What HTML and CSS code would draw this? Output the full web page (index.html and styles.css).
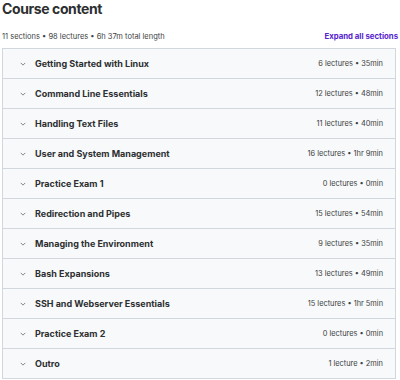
FILE: index.html
```html
<!DOCTYPE html>
<html>
<head>
<meta charset="utf-8">
<link rel="stylesheet" href="styles.css">
</head>
<body>
<div class="page">
  <h2 class="title">Course content</h2>
  <div class="meta">
    <span class="summary">11 sections • 98 lectures • 6h 37m total length</span>
    <span class="expand">Expand all sections</span>
  </div>
  <div class="list">
    <div class="row"><span class="chev"><svg viewBox="0 0 8 5" width="6" height="4"><path d="M1 1l3 3 3-3" fill="none" stroke="#6a6f73" stroke-width="1.1"/></svg></span><span class="name">Getting Started with Linux</span><span class="info">6 lectures • 35min</span></div>
    <div class="row"><span class="chev"><svg viewBox="0 0 8 5" width="6" height="4"><path d="M1 1l3 3 3-3" fill="none" stroke="#6a6f73" stroke-width="1.1"/></svg></span><span class="name">Command Line Essentials</span><span class="info">12 lectures • 48min</span></div>
    <div class="row"><span class="chev"><svg viewBox="0 0 8 5" width="6" height="4"><path d="M1 1l3 3 3-3" fill="none" stroke="#6a6f73" stroke-width="1.1"/></svg></span><span class="name">Handling Text Files</span><span class="info">11 lectures • 40min</span></div>
    <div class="row"><span class="chev"><svg viewBox="0 0 8 5" width="6" height="4"><path d="M1 1l3 3 3-3" fill="none" stroke="#6a6f73" stroke-width="1.1"/></svg></span><span class="name">User and System Management</span><span class="info">16 lectures • 1hr 9min</span></div>
    <div class="row"><span class="chev"><svg viewBox="0 0 8 5" width="6" height="4"><path d="M1 1l3 3 3-3" fill="none" stroke="#6a6f73" stroke-width="1.1"/></svg></span><span class="name">Practice Exam 1</span><span class="info">0 lectures • 0min</span></div>
    <div class="row"><span class="chev"><svg viewBox="0 0 8 5" width="6" height="4"><path d="M1 1l3 3 3-3" fill="none" stroke="#6a6f73" stroke-width="1.1"/></svg></span><span class="name">Redirection and Pipes</span><span class="info">15 lectures • 54min</span></div>
    <div class="row"><span class="chev"><svg viewBox="0 0 8 5" width="6" height="4"><path d="M1 1l3 3 3-3" fill="none" stroke="#6a6f73" stroke-width="1.1"/></svg></span><span class="name">Managing the Environment</span><span class="info">9 lectures • 35min</span></div>
    <div class="row"><span class="chev"><svg viewBox="0 0 8 5" width="6" height="4"><path d="M1 1l3 3 3-3" fill="none" stroke="#6a6f73" stroke-width="1.1"/></svg></span><span class="name">Bash Expansions</span><span class="info">13 lectures • 49min</span></div>
    <div class="row"><span class="chev"><svg viewBox="0 0 8 5" width="6" height="4"><path d="M1 1l3 3 3-3" fill="none" stroke="#6a6f73" stroke-width="1.1"/></svg></span><span class="name">SSH and Webserver Essentials</span><span class="info">15 lectures • 1hr 5min</span></div>
    <div class="row"><span class="chev"><svg viewBox="0 0 8 5" width="6" height="4"><path d="M1 1l3 3 3-3" fill="none" stroke="#6a6f73" stroke-width="1.1"/></svg></span><span class="name">Practice Exam 2</span><span class="info">0 lectures • 0min</span></div>
    <div class="row"><span class="chev"><svg viewBox="0 0 8 5" width="6" height="4"><path d="M1 1l3 3 3-3" fill="none" stroke="#6a6f73" stroke-width="1.1"/></svg></span><span class="name">Outro</span><span class="info">1 lecture • 2min</span></div>
  </div>
</div>
</body>
</html>
```
FILE: styles.css
```css
* { box-sizing: border-box; }
body { margin: 0; background: #fff; font-family: Inter, "Noto Sans", sans-serif; color: #2d2f31; }
.page { padding: 0 4px 0 2px; }
.title { margin: 0; font-size: 14px; font-weight: 700; line-height: 17px; letter-spacing: -0.4px; }
.meta { display: flex; justify-content: space-between; align-items: center; margin-top: 12px; height: 14px; margin-bottom: 5px; }
.summary { font-size: 7.5px; color: #3e4143; }
.expand { font-size: 7.8px; font-weight: 700; color: #5624d0; margin-right: -2px; }
.list { border: 1px solid #d1d7dc; }
.row { display: flex; align-items: center; height: 30px; background: #f7f9fa; border-top: 1px solid #d1d7dc; padding: 0 12px 0 17px; }
.row:first-child { border-top: none; height: 29px; }
.chev { width: 15px; display: flex; align-items: center; }
.name { flex: 1; font-size: 9px; font-weight: 700; }
.info { font-size: 7.4px; color: #3e4143; }
```
